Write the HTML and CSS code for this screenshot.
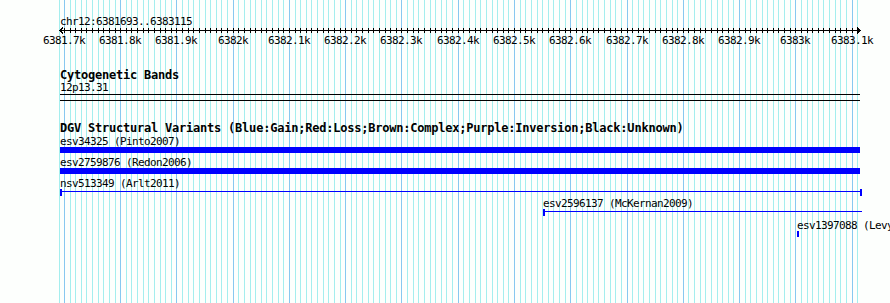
FILE: index.html
```html
<!DOCTYPE html>
<html lang="en">
<head>
    <meta charset="UTF-8">
    <title>chr12:6381693..6383115</title>
    <link rel="stylesheet" href="styles.css">
</head>
<body>
    <div class="view">
        <!-- grid lines, filled in by the script below -->
        <div class="grid" id="grid"></div>

        <div class="ruler">
            <div class="ruler-title text-small">chr12:6381693..6383115</div>
            <svg class="ruler-axis" id="axis" width="890" height="9" shape-rendering="crispEdges"></svg>
            <div class="ruler-labels text-small" id="labels"></div>
        </div>

        <section class="track track-cyto">
            <h2 class="track-title">Cytogenetic Bands</h2>
            <div class="feature-label text-small">12p13.31</div>
            <div class="band"></div>
        </section>

        <section class="track track-dgv">
            <h2 class="track-title">DGV Structural Variants (Blue:Gain;Red:Loss;Brown:Complex;Purple:Inversion;Black:Unknown)</h2>

            <div class="feature feature-bar-row">
                <div class="feature-label text-small">esv34325 (Pinto2007)</div>
                <div class="bar" style="width: 800px;"></div>
            </div>

            <div class="feature feature-bar-row">
                <div class="feature-label text-small">esv2759876 (Redon2006)</div>
                <div class="bar" style="width: 800px;"></div>
            </div>

            <div class="feature">
                <div class="feature-label text-small">nsv513349 (Arlt2011)</div>
                <div class="segment capped" style="width: 802px;"></div>
            </div>

            <div class="feature feature-tight" style="margin-left: 483px;">
                <div class="feature-label text-small">esv2596137 (McKernan2009)</div>
                <div class="segment open-right" style="width: 319px;"></div>
            </div>

            <div class="feature" style="margin-left: 737px;">
                <div class="feature-label text-small">esv1397088 (Levy2007)</div>
                <div class="point"></div>
            </div>
        </section>
    </div>

    <script>
        // ruler and grid for chr12:6381693..6383115 drawn into 800px starting at x=60
        const START = 6381693;
        const END = 6383115;
        const LEFT = 60;
        const WIDTH = 800;
        const scale = WIDTH / (END - START);
        const px = bp => Math.round(LEFT + (bp - START) * scale);

        const grid = document.getElementById('grid');
        const axis = document.getElementById('axis');
        const labels = document.getElementById('labels');
        const NS = 'http://www.w3.org/2000/svg';

        function gridLine(x, major) {
            const line = document.createElement('span');
            line.className = major ? 'grid-line major' : 'grid-line';
            line.style.left = x + 'px';
            grid.appendChild(line);
        }

        gridLine(59, false);

        let d = 'M60 4.5 H860 M63 1.5 L60 4.5 L63 7.5 M857 1.5 L860 4.5 L857 7.5';
        for (let bp = 6381700; bp <= END; bp += 10) {
            const x = px(bp);
            const major = bp % 100 === 0;
            gridLine(x, major);
            d += ' M' + (x + 0.5) + ' 2 V7';

            if (major) {
                const kb = bp / 1000;
                const label = document.createElement('span');
                label.className = 'tick-label';
                label.textContent = kb + 'k';
                label.style.left = (x - label.textContent.length * 3) + 'px';
                labels.appendChild(label);
            }
        }

        const path = document.createElementNS(NS, 'path');
        path.setAttribute('d', d);
        path.setAttribute('class', 'axis-path');
        axis.appendChild(path);
    </script>
</body>
</html>
```

FILE: styles.css
```css
/* Page and drawing area */
body {
    margin: 0;
    background-color: #fdfffd;
    font-family: "DejaVu Sans Mono", "Liberation Mono", monospace;
    color: #000;
}

.view {
    position: relative;
    width: 890px;
    height: 303px;
    overflow: hidden;
}

/* Grid behind everything */
.grid {
    position: absolute;
    top: 0;
    left: 0;
    right: 0;
    bottom: 0;
}

.grid-line {
    position: absolute;
    top: 0;
    bottom: 0;
    width: 1px;
    background-color: #a4eeee;
}

.grid-line.major {
    background-color: #88c8f0;
}

/* Fonts that look like the gd bitmap ones */
.text-small {
    font-size: 11px;
    letter-spacing: -0.62px;
    line-height: 11px;
    white-space: nowrap;
}

.track-title {
    margin: 0;
    font-size: 12px;
    font-weight: bold;
    letter-spacing: -0.22px;
    line-height: 12px;
    white-space: nowrap;
}

/* Ruler */
.ruler {
    position: relative;
}

.ruler-title {
    padding-top: 16px;
    padding-left: 60px;
}

.ruler-axis {
    display: block;
    margin-top: -1px;
}

.axis-path {
    fill: none;
    stroke: #000;
    stroke-width: 1;
}

.ruler-labels {
    position: relative;
    height: 11px;
}

.tick-label {
    position: absolute;
    top: 0;
}

/* Tracks */
.track {
    position: relative;
    padding-left: 60px;
    width: 830px;
}

.track-cyto {
    margin-top: 23px;
}

.track-cyto .feature-label {
    margin-top: 1px;
}

.band {
    margin-top: 1px;
    width: 800px;
    height: 5px;
    border-top: 1px solid #000;
    border-bottom: 1px solid #000;
}

.track-dgv {
    margin-top: 21px;
}

.feature {
    margin-top: 4px;
}

.feature:first-of-type {
    margin-top: 2px;
}

.feature.feature-tight {
    margin-top: 2px;
}

.bar {
    height: 6px;
    background-color: #0000ff;
}

.segment {
    box-sizing: border-box;
    height: 7px;
    border-left: 2px solid #0000ff;
    background: linear-gradient(#0000ff, #0000ff) 0 2px / 100% 1px no-repeat;
}

.segment.capped {
    border-right: 2px solid #0000ff;
}

.point {
    width: 2px;
    height: 6px;
    background-color: #0000ff;
}
```
